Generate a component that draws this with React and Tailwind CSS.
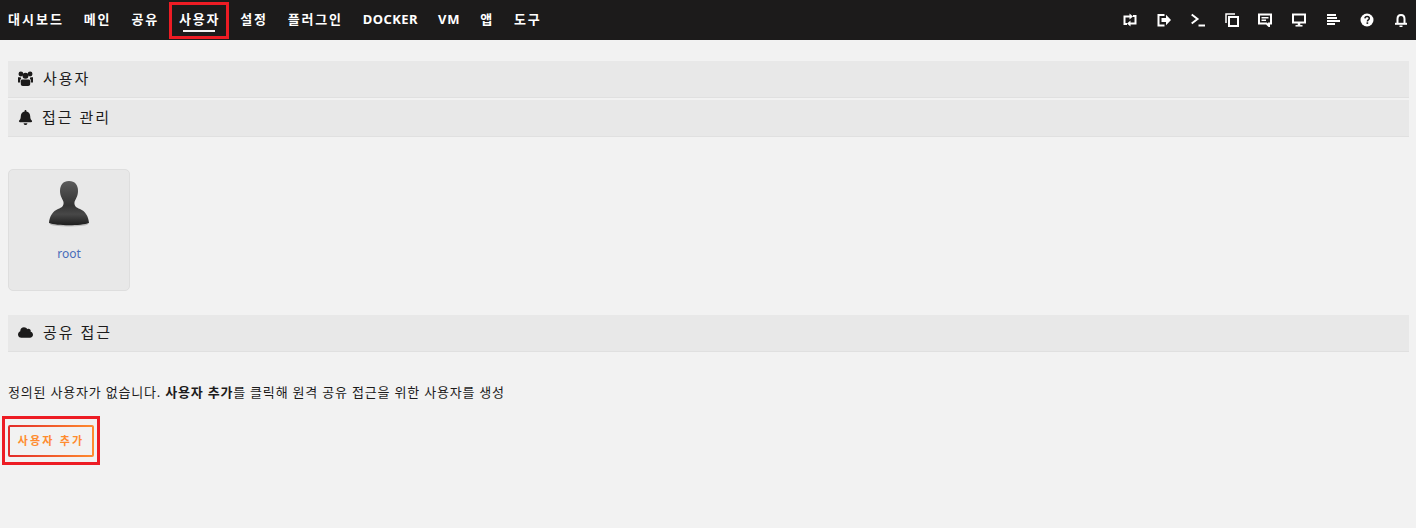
import React from "react";
import { FaBell, FaCloud } from "react-icons/fa";

const font = "font-['Noto_Sans','Noto_Sans_CJK_KR',sans-serif]";

const navItems = [
  { label: "대시보드", tracking: "tracking-[2px]" },
  { label: "메인", tracking: "tracking-[1.8px]" },
  { label: "공유", tracking: "tracking-[1.8px]" },
  { label: "사용자", tracking: "tracking-[1.8px]", active: true },
  { label: "설정", tracking: "tracking-[1.8px]" },
  { label: "플러그인", tracking: "tracking-[1.8px]" },
  { label: "DOCKER", tracking: "tracking-[0.45px]" },
  { label: "VM", tracking: "tracking-[0.7px]" },
  { label: "앱", tracking: "tracking-[1.8px]" },
  { label: "도구", tracking: "tracking-[1.8px]" },
];

function NavItem({ item }) {
  return (
    <div className="relative flex h-10 items-center">
      <span className={`${item.tracking} text-[13px] font-bold whitespace-nowrap text-white`}>{item.label}</span>
      {item.active && (
        <>
          <div className="absolute left-[4px] top-[30px] h-[2px] w-[32px] bg-[#f2f2f2]" />
          <div className="absolute -left-[10px] top-[2px] h-[37px] w-[60px] border-[3px] border-[#ed1c24]" />
        </>
      )}
    </div>
  );
}

function LoopIcon() {
  return (
    <svg viewBox="0 0 14 14" className="h-[14px] w-[14px]" fill="none" stroke="white" strokeWidth="2">
      <path d="M7 3.500H1.500V11H4" />
      <path d="M7 10.500h5.500V3H10" />
      <path d="M6.500 .5L10 3.500 6.500 6.500z" fill="white" stroke="none" />
      <path d="M7.500 7.500L4 10.500 7.500 13.500z" fill="white" stroke="none" />
    </svg>
  );
}

function LoginIcon() {
  return (
    <svg viewBox="0 0 14 14" className="h-[14px] w-[14px]" fill="none" stroke="white" strokeWidth="2">
      <path d="M7.500 2H1.500v10.500h6" />
      <path d="M4.500 5h4.500V1.800L14 7l-5 5.200V9H4.500z" fill="white" stroke="none" />
    </svg>
  );
}

function TerminalIcon() {
  return (
    <svg viewBox="0 0 14 14" className="h-[14px] w-[14px]" fill="none" stroke="white" strokeWidth="2">
      <path d="M.7 1.500L6.500 6 .7 10.500" />
      <path d="M7.500 12.500H14" />
    </svg>
  );
}

function CopyIcon() {
  return (
    <svg viewBox="0 0 14 14" className="h-[14px] w-[14px]" fill="none" stroke="white" strokeWidth="1.500">
      <path d="M1 10V1h9" />
      <rect x="4" y="4" width="9" height="9" strokeWidth="2" />
    </svg>
  );
}

function CommentIcon() {
  return (
    <svg viewBox="0 0 14 14" className="h-[14px] w-[14px]" fill="none" stroke="white" strokeWidth="2">
      <path d="M1 1.500h12v9h-2v2.500l-2.500-2.500H1z" />
      <path d="M3.500 4.700h7M3.500 7.300h4.500" strokeWidth="1.500" />
    </svg>
  );
}

function DesktopIcon() {
  return (
    <svg viewBox="0 0 14 14" className="h-[14px] w-[14px]" fill="none" stroke="white">
      <rect x="1" y="1.500" width="12" height="8" strokeWidth="2" />
      <path d="M3.500 12.800h7" strokeWidth="1.500" />
      <path d="M7 10v2" strokeWidth="2.500" />
    </svg>
  );
}

function LogIcon() {
  return (
    <svg viewBox="0 0 14 14" className="h-[14px] w-[14px]" fill="white">
      <rect x="1" y="1" width="9" height="2" />
      <rect x="1" y="4" width="10" height="2" />
      <rect x="1" y="7" width="13" height="2" />
      <rect x="1" y="10" width="8" height="2" />
    </svg>
  );
}

function HelpIcon() {
  return (
    <svg viewBox="0 0 14 14" className="h-[14px] w-[14px]">
      <circle cx="7" cy="7" r="6.500" fill="white" />
      <path d="M4.900 5.400C5 4.100 5.900 3.400 7.100 3.400c1.300 0 2.200.8 2.200 1.900 0 1.700-1.900 1.600-1.900 3.100" fill="none" stroke="#1c1b1b" strokeWidth="1.500" />
      <rect x="6.500" y="9.300" width="1.700" height="1.600" fill="#1c1b1b" />
    </svg>
  );
}

function BellIcon() {
  return (
    <svg viewBox="0 0 14 14" className="h-[14px] w-[14px]" fill="none" stroke="white" strokeWidth="2">
      <path d="M3.500 10.500V6c0-2.400 1.500-4 3.500-4s3.500 1.600 3.500 4v4.500" />
      <path d="M1 10.800h12" />
      <path d="M5.500 12.500h3V14h-3z" fill="white" stroke="none" />
    </svg>
  );
}

function UsersIcon() {
  return (
    <svg viewBox="0 0 15 15" className="h-[15px] w-[15px]" fill="currentColor">
      <circle cx="2.900" cy="3" r="2.400" />
      <circle cx="12.100" cy="3" r="2.400" />
      <circle cx="7.500" cy="4.700" r="3" />
      <path d="M0 6.200h2.600l.6 1.600-1 .9v2.800H0z" />
      <path d="M15 6.200h-2.600l-.6 1.600 1 .9v2.800H15z" />
      <path d="M4.500 8.400h6c1 0 1.700.7 1.700 1.700V13c0 1.200-.8 2-2 2H4.800c-1.200 0-2-.8-2-2v-2.900c0-1 .7-1.700 1.700-1.700z" />
    </svg>
  );
}

function SectionHeader({ icon, title, gap }) {
  return (
    <div className="flex h-[37px] items-center border-b border-[#e0e0e0] bg-[#e8e8e8] pb-[2px] pl-[10px]">
      <span className="flex w-[15px] justify-center text-[15px] text-[#1c1b1b]">{icon}</span>
      <span className={`${gap} text-[15px] tracking-[2px] whitespace-pre text-[#1c1b1b]`}>{title}</span>
    </div>
  );
}

export default function App() {
  return (
    <div className={`${font} h-[528px] w-[1416px] overflow-hidden bg-[#f2f2f2]`}>
      <header className="flex h-10 items-center justify-between bg-[#1c1b1b] pl-[8px] pr-[8px]">
        <nav className="flex gap-[20px]">
          {navItems.map((item) => (
            <NavItem key={item.label} item={item} />
          ))}
        </nav>
        <div className="flex items-center gap-[19.9px]">
          <LoopIcon />
          <LoginIcon />
          <TerminalIcon />
          <CopyIcon />
          <CommentIcon />
          <DesktopIcon />
          <LogIcon />
          <HelpIcon />
          <BellIcon />
        </div>
      </header>

      <main className="pl-[8px] pr-[7px] pt-[21px]">
        <div className="flex flex-col gap-[2px]">
          <SectionHeader icon={<UsersIcon />} title="사용자" gap="ml-[10px]" />
          <SectionHeader icon={<FaBell />} title="접근 관리" gap="ml-[9px]" />
        </div>

        <div className="mt-[32px] flex h-[122px] w-[122px] flex-col items-center rounded-[5px] border border-[#dedede] bg-[#e8e8e8]">
          <svg viewBox="0 0 40 46" className="mt-[11px] h-[46px] w-[40px]">
            <defs>
              <linearGradient id="bust" x1="0" y1="0" x2="0" y2="1">
                <stop offset="0" stopColor="#5c5c5c" />
                <stop offset="0.3" stopColor="#464646" />
                <stop offset="0.55" stopColor="#333333" />
                <stop offset="0.75" stopColor="#484848" />
                <stop offset="1" stopColor="#1d1d1d" />
              </linearGradient>
            </defs>
            <ellipse cx="20" cy="43" rx="19" ry="2.500" fill="#000000" opacity="0.2" />
            <path
              d="M20 0C26 0 29 4 29 10C29 15 26.500 18 25.500 21C25 25 27 26.500 31 28C36 30 39.500 35 40 42C32 45 8 45 0 42C.5 35 4 30 9 28C13 26.500 15 25 14.500 21C13.500 18 11 15 11 10C11 4 14 0 20 0Z"
              fill="url(#bust)"
            />
          </svg>
          <span className="mt-[18px] text-[12px] text-[#486dba]">root</span>
        </div>

        <div className="mt-[24px]">
          <SectionHeader icon={<FaCloud />} title="공유 접근" gap="ml-[10px]" />
        </div>

        <p className="mt-[30px] text-[13px] leading-[20px] tracking-[0.8px] whitespace-nowrap text-[#1c1b1b]">
          정의된 사용자가 없습니다. <b>사용자 추가</b>를 클릭해 원격 공유 접근을 위한 사용자를 생성
        </p>

        <div className="relative mt-[23px] w-fit">
          <button className="flex h-[32px] w-[86px] items-center justify-center rounded-[2px] border-2 border-transparent bg-[linear-gradient(#f2f2f2,#f2f2f2),linear-gradient(90deg,#e22828,#ff8c2f)] text-[11px] font-bold tracking-[2.2px] [background-clip:padding-box,border-box] [background-origin:border-box] text-[#ff8c2f]">
            사용자 추가
          </button>
          <div className="absolute -left-[6px] -top-[9px] h-[49px] w-[98px] border-[3px] border-[#ed1c24]" />
        </div>
      </main>
    </div>
  );
}
